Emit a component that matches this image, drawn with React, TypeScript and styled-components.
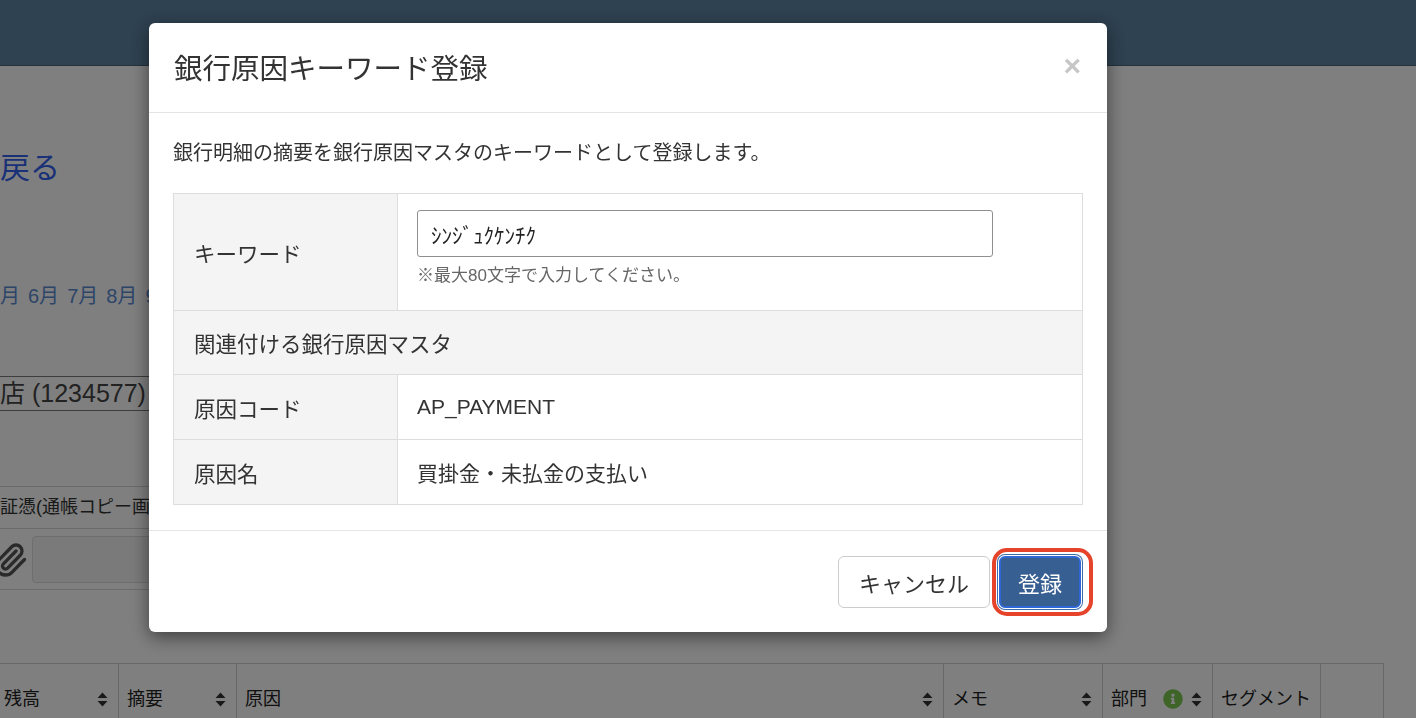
import React from 'react';
import styled, { createGlobalStyle } from 'styled-components';
import { FaInfoCircle } from 'react-icons/fa';
import { Paperclip } from 'lucide-react';

const GlobalStyle = createGlobalStyle`
  html, body {
    margin: 0;
    padding: 0;
    overflow: hidden;
  }
  body {
    font-family: "Liberation Sans", "Noto Sans CJK JP", sans-serif;
    color: #333;
    background: #fff;
  }
  * {
    box-sizing: border-box;
  }
`;

const Page = styled.div`
  width: 1416px;
  height: 718px;
  overflow: hidden;
  background: #fff;
`;

const Navbar = styled.header`
  height: 66px;
  background: #5e84a2;
  border-bottom: 1px solid #46657f;
`;

const Main = styled.main`
  display: flex;
  flex-direction: column;
`;

const BackLink = styled.a`
  margin-top: 82px;
  font-size: 30px;
  line-height: 40px;
  color: #3462ee;
  text-decoration: none;
`;

const MonthRow = styled.div`
  margin-top: 94px;
  display: flex;
  gap: 8px;
  font-size: 20px;
  line-height: 28px;
  color: #5a8bd2;
`;

const StoreBox = styled.div`
  margin-top: 66px;
  width: 420px;
  height: 35px;
  border-top: 1px solid #7a7a7a;
  border-bottom: 1px solid #7a7a7a;
  font-size: 25px;
  line-height: 33px;
  color: #444;
  white-space: nowrap;
`;

const EvidenceHead = styled.div`
  margin-top: 75px;
  width: 420px;
  height: 43px;
  border-top: 1px solid #d4d4d4;
  border-bottom: 1px solid #d4d4d4;
  font-size: 18px;
  line-height: 41px;
  color: #333;
  white-space: nowrap;
`;

const AttachRow = styled.div`
  display: flex;
  align-items: center;
  gap: 4px;
  width: 420px;
  padding: 7px 0 6px;
  margin-left: -8px;
  border-bottom: 1px solid #d8d8d8;
`;

const AttachInput = styled.div`
  width: 300px;
  height: 47px;
  background: #f4f4f4;
  border: 1px solid #dcdcdc;
  border-radius: 4px;
`;

const GridHead = styled.div`
  margin-top: 73px;
  display: grid;
  grid-template-columns: 118px 118px 707px 159px 110px 108px 64px;
  width: 1384px;
  border-top: 1px solid #cfcfcf;
`;

const HeadCell = styled.div<{ $first?: boolean; $last?: boolean }>`
  display: flex;
  align-items: center;
  gap: 6px;
  height: 60px;
  padding: 10px 10px 0 ${(p) => (p.$first ? '4px' : '8px')};
  border-left: ${(p) => (p.$first ? 'none' : '1px solid #cfcfcf')};
  border-right: ${(p) => (p.$last ? '1px solid #cfcfcf' : 'none')};
  font-size: 18px;
  line-height: 26px;
  color: #222;
`;

const HeadLabel = styled.span`
  flex: 1;
  white-space: nowrap;
`;

const InfoIcon = styled(FaInfoCircle)`
  color: #7cc850;
  font-size: 20px;
  margin-right: 2px;
`;

const SortIcon: React.FC = () => (
  <svg width="11" height="15" viewBox="0 0 11 15">
    <path d="M5.5 0.5 L10.5 6 H0.5 Z M5.5 14.5 L10.5 9 H0.5 Z" fill="#333" />
  </svg>
);

const Backdrop = styled.div`
  position: fixed;
  inset: 0;
  background: rgba(0, 0, 0, 0.5);
`;

const Modal = styled.div`
  margin: 23px 0 0 149px;
  width: 958px;
  background: #fff;
  border-radius: 6px;
  box-shadow: 0 5px 18px rgba(0, 0, 0, 0.5);
`;

const ModalHeader = styled.div`
  height: 90px;
  padding: 0 26px 0 25px;
  display: flex;
  align-items: center;
  justify-content: space-between;
  border-bottom: 1px solid #e5e5e5;
`;

const ModalTitle = styled.h4`
  margin: 0;
  font-size: 28.5px;
  font-weight: 400;
  color: #333;
  padding-bottom: 2px;
`;

const CloseButton = styled.button`
  border: none;
  background: none;
  padding: 0;
  font-family: "Liberation Sans", sans-serif;
  font-size: 30px;
  font-weight: 700;
  line-height: 1;
  color: #c6c6c6;
  margin-top: -4px;
`;

const ModalBody = styled.div`
  padding: 27px 24px 25px;
  border-bottom: 1px solid #e5e5e5;
`;

const Lead = styled.p`
  margin: 0 0 27px;
  font-size: 20px;
  line-height: 26px;
  color: #333;
`;

const FormTable = styled.div`
  display: grid;
  grid-template-columns: 224px 1fr;
  border: 1px solid #dddddd;
  border-bottom: none;
`;

const LabelCell = styled.div<{ $height: number }>`
  height: ${(p) => p.$height}px;
  display: flex;
  align-items: center;
  padding: 0 20px;
  background: #f4f4f4;
  border-right: 1px solid #dddddd;
  border-bottom: 1px solid #dddddd;
  font-size: 21.5px;
  color: #333;
`;

const SectionCell = styled(LabelCell)`
  grid-column: 1 / span 2;
  border-right: none;
`;

const ValueCell = styled.div<{ $height: number }>`
  height: ${(p) => p.$height}px;
  display: flex;
  flex-direction: column;
  justify-content: center;
  padding: 0 19px;
  border-bottom: 1px solid #dddddd;
  font-size: 21px;
  color: #333;
`;

const KeywordCell = styled(ValueCell)`
  justify-content: flex-start;
  padding-top: 16px;
`;

const TextInput = styled.input`
  width: 576px;
  height: 47px;
  padding: 0 13px;
  border: 1px solid #8f8f8f;
  border-radius: 3px;
  font-family: "Noto Sans CJK JP", sans-serif;
  font-size: 21px;
  color: #222;
  outline: none;
`;

const HelpText = styled.div`
  margin-top: 7px;
  font-size: 17px;
  line-height: 24px;
  color: #666;
`;

const ModalFooter = styled.div`
  height: 101px;
  padding: 0 26px 0 24px;
  display: flex;
  align-items: center;
  justify-content: flex-end;
  gap: 9px;
`;

const Button = styled.button<{ $primary?: boolean }>`
  height: 52px;
  padding: 0 ${(p) => (p.$primary ? '17px' : '20px')};
  border-radius: 6px;
  font-family: "Liberation Sans", "Noto Sans CJK JP", sans-serif;
  font-size: 22px;
  color: ${(p) => (p.$primary ? '#fff' : '#333')};
  background: ${(p) => (p.$primary ? '#375f91' : '#fff')};
  border: ${(p) => (p.$primary ? '2px solid #2e68d6' : '1px solid #cccccc')};
  box-shadow: ${(p) => (p.$primary ? '0 0 0 1px #fff, 0 0 0 2px #3d6ba8' : 'none')};
`;

const Highlight = styled.span`
  position: relative;
  display: inline-flex;

  &::after {
    content: '';
    position: absolute;
    top: -8px;
    bottom: -8px;
    left: -7px;
    right: -12px;
    border: 4px solid #e6432b;
    border-radius: 15px;
    pointer-events: none;
  }
`;

const columns = [
  { label: '残高', sort: true },
  { label: '摘要', sort: true },
  { label: '原因', sort: true },
  { label: 'メモ', sort: true },
  { label: '部門', sort: true, info: true },
  { label: 'セグメント', sort: false },
  { label: '', sort: false },
];

const App: React.FC = () => {
  return (
    <>
      <GlobalStyle />
      <Page>
        <Navbar />
        <Main>
          <BackLink href="#">戻る</BackLink>
          <MonthRow>
            <span>月</span>
            <span>6月</span>
            <span>7月</span>
            <span>8月</span>
            <span>9月</span>
          </MonthRow>
          <StoreBox>店 (1234577)</StoreBox>
          <EvidenceHead>証憑(通帳コピー画像)</EvidenceHead>
          <AttachRow>
            <Paperclip size={36} color="#555" strokeWidth={2.2} />
            <AttachInput />
          </AttachRow>
          <GridHead>
            {columns.map((c, i) => (
              <HeadCell key={i} $first={i === 0} $last={i === columns.length - 1}>
                <HeadLabel>{c.label}</HeadLabel>
                {c.info && <InfoIcon />}
                {c.sort && <SortIcon />}
              </HeadCell>
            ))}
          </GridHead>
        </Main>
      </Page>

      <Backdrop>
        <Modal>
          <ModalHeader>
            <ModalTitle>銀行原因キーワード登録</ModalTitle>
            <CloseButton aria-label="close">×</CloseButton>
          </ModalHeader>
          <ModalBody>
            <Lead>銀行明細の摘要を銀行原因マスタのキーワードとして登録します。</Lead>
            <FormTable>
              <LabelCell $height={117}>キーワード</LabelCell>
              <KeywordCell $height={117}>
                <TextInput defaultValue="ｼﾝｼﾞｭｸｹﾝﾁｸ" />
                <HelpText>※最大80文字で入力してください。</HelpText>
              </KeywordCell>
              <SectionCell $height={64}>関連付ける銀行原因マスタ</SectionCell>
              <LabelCell $height={65}>原因コード</LabelCell>
              <ValueCell $height={65}>AP_PAYMENT</ValueCell>
              <LabelCell $height={65}>原因名</LabelCell>
              <ValueCell $height={65}>買掛金・未払金の支払い</ValueCell>
            </FormTable>
          </ModalBody>
          <ModalFooter>
            <Button>キャンセル</Button>
            <Highlight>
              <Button $primary>登録</Button>
            </Highlight>
          </ModalFooter>
        </Modal>
      </Backdrop>
    </>
  );
};

export default App;
